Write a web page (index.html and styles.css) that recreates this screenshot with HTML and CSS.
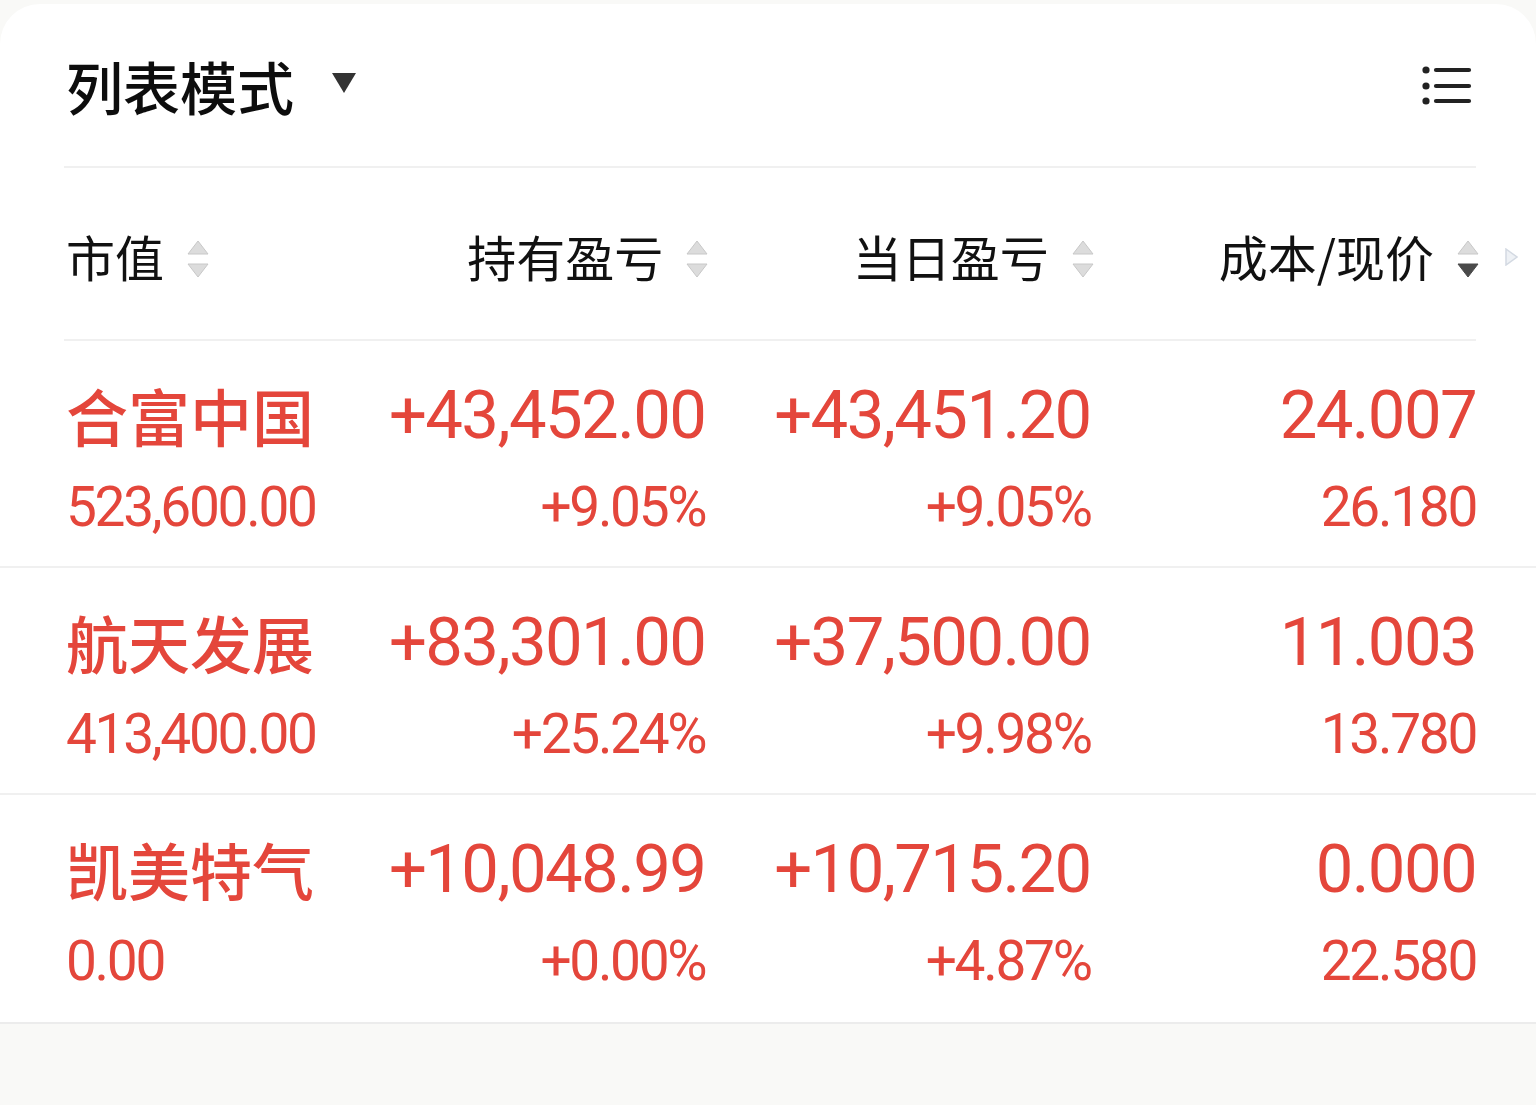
FILE: index.html
```html
<!DOCTYPE html>
<html lang="zh-CN">
<head>
    <meta charset="UTF-8">
    <title>列表模式</title>
    <link rel="stylesheet" href="styles.css">
</head>
<body>
<div class="card">
    <!--标题栏-->
    <div class="top">
        <div class="mode">
            <span class="mode-text">列表模式</span>
            <svg class="caret" width="24" height="20" viewBox="0 0 24 20"><polygon points="0,0 24,0 12,20" fill="#333"/></svg>
        </div>
        <svg class="list-icon" width="50" height="42" viewBox="0 0 50 42">
            <circle cx="4" cy="5" r="3.6" fill="#222"/>
            <circle cx="4" cy="21" r="3.6" fill="#222"/>
            <circle cx="4" cy="36" r="3.6" fill="#222"/>
            <line x1="14" y1="5" x2="47" y2="5" stroke="#222" stroke-width="4.2" stroke-linecap="round"/>
            <line x1="14" y1="21" x2="47" y2="21" stroke="#222" stroke-width="4.2" stroke-linecap="round"/>
            <line x1="14" y1="36" x2="47" y2="36" stroke="#222" stroke-width="4.2" stroke-linecap="round"/>
        </svg>
    </div>

    <!--表头-->
    <div class="head">
        <div class="th left">市值<svg class="sort" width="22" height="38" viewBox="0 0 22 38"><polygon points="11,1 21,14 1,14" fill="#dcdcdc" stroke="#c8c8c8"/><polygon points="1,24 21,24 11,37" fill="#dcdcdc" stroke="#c8c8c8"/></svg></div>
        <div class="th">持有盈亏<svg class="sort" width="22" height="38" viewBox="0 0 22 38"><polygon points="11,1 21,14 1,14" fill="#dcdcdc" stroke="#c8c8c8"/><polygon points="1,24 21,24 11,37" fill="#dcdcdc" stroke="#c8c8c8"/></svg></div>
        <div class="th">当日盈亏<svg class="sort" width="22" height="38" viewBox="0 0 22 38"><polygon points="11,1 21,14 1,14" fill="#dcdcdc" stroke="#c8c8c8"/><polygon points="1,24 21,24 11,37" fill="#dcdcdc" stroke="#c8c8c8"/></svg></div>
        <div class="th">成本/现价<svg class="sort" width="22" height="38" viewBox="0 0 22 38"><polygon points="11,1 21,14 1,14" fill="#dcdcdc" stroke="#c8c8c8"/><polygon points="1,24 21,24 11,37" fill="#4a4a4a" stroke="#4a4a4a"/></svg></div>
        <svg class="more" width="13" height="18" viewBox="0 0 13 18"><polygon points="1,1 12,9 1,17" fill="#eef1f5" stroke="#d3d9e2" stroke-width="1.5"/></svg>
    </div>

    <!--持仓列表-->
    <div class="row">
        <div class="cell left"><div class="name">合富中国</div><div class="sub">523,600.00</div></div>
        <div class="cell"><div class="big">+43,452.00</div><div class="sub">+9.05%</div></div>
        <div class="cell"><div class="big">+43,451.20</div><div class="sub">+9.05%</div></div>
        <div class="cell"><div class="big">24.007</div><div class="sub">26.180</div></div>
    </div>
    <div class="row">
        <div class="cell left"><div class="name">航天发展</div><div class="sub">413,400.00</div></div>
        <div class="cell"><div class="big">+83,301.00</div><div class="sub">+25.24%</div></div>
        <div class="cell"><div class="big">+37,500.00</div><div class="sub">+9.98%</div></div>
        <div class="cell"><div class="big">11.003</div><div class="sub">13.780</div></div>
    </div>
    <div class="row">
        <div class="cell left"><div class="name">凯美特气</div><div class="sub">0.00</div></div>
        <div class="cell"><div class="big">+10,048.99</div><div class="sub">+0.00%</div></div>
        <div class="cell"><div class="big">+10,715.20</div><div class="sub">+4.87%</div></div>
        <div class="cell"><div class="big">0.000</div><div class="sub">22.580</div></div>
    </div>
</div>
</body>
</html>
```

FILE: styles.css
```css
* {
    padding: 0;
    margin: 0;
    box-sizing: border-box;
}

body {
    background: #f9f9f7;
    font-family: "Noto Sans CJK SC", "Noto Sans", sans-serif;
    color: #111;
}

.card {
    margin-top: 4px;
    background: #fff;
    border-radius: 40px 40px 0 0;
    border-bottom: 2px solid #ececec;
}

.top {
    margin: 0 60px 0 64px;
    height: 164px;
    display: flex;
    align-items: center;
    justify-content: space-between;
    border-bottom: 2px solid #f0f0f0;
}

.mode {
    display: flex;
    align-items: center;
    gap: 38px;
    padding-left: 2px;
}

.mode-text {
    font-size: 57px;
    font-weight: 500;
    line-height: 1;
    color: #0d0d0d;
}

.caret {
    margin-top: -4px;
}

.list-icon {
    margin-right: 4px;
    margin-top: 2px;
}

.head {
    position: relative;
    margin: 0 60px 0 64px;
    height: 173px;
    display: grid;
    grid-template-columns: 256px 1fr 1fr 1fr;
    align-items: center;
    border-bottom: 2px solid #f0f0f0;
}

.th {
    display: flex;
    align-items: center;
    justify-content: flex-end;
    gap: 23px;
    font-size: 49px;
    line-height: 1;
    margin-right: -3px;
    padding-top: 4px;
}

.th.left {
    justify-content: flex-start;
    padding-left: 2px;
}

.sort {
    margin-top: 6px;
}

.more {
    position: absolute;
    right: -42px;
    top: 80px;
}

.row {
    height: 227px;
    padding: 28px 60px 0 64px;
    display: grid;
    grid-template-columns: 256px 1fr 1fr 1fr;
    border-bottom: 2px solid #f0f0f0;
    color: #e4463b;
}

.row:last-child {
    border-bottom: 0;
}

.cell {
    text-align: right;
}

.cell.left {
    text-align: left;
    padding-left: 2px;
}

.name {
    height: 92px;
    line-height: 92px;
    font-size: 62px;
    font-weight: 500;
}

.big {
    height: 92px;
    line-height: 92px;
    font-family: Roboto, "Noto Sans", sans-serif;
    font-size: 67px;
    letter-spacing: -1.6px;
}

.sub {
    height: 92px;
    line-height: 92px;
    font-family: Roboto, "Noto Sans", sans-serif;
    font-size: 55px;
    letter-spacing: -2.3px;
}
```
